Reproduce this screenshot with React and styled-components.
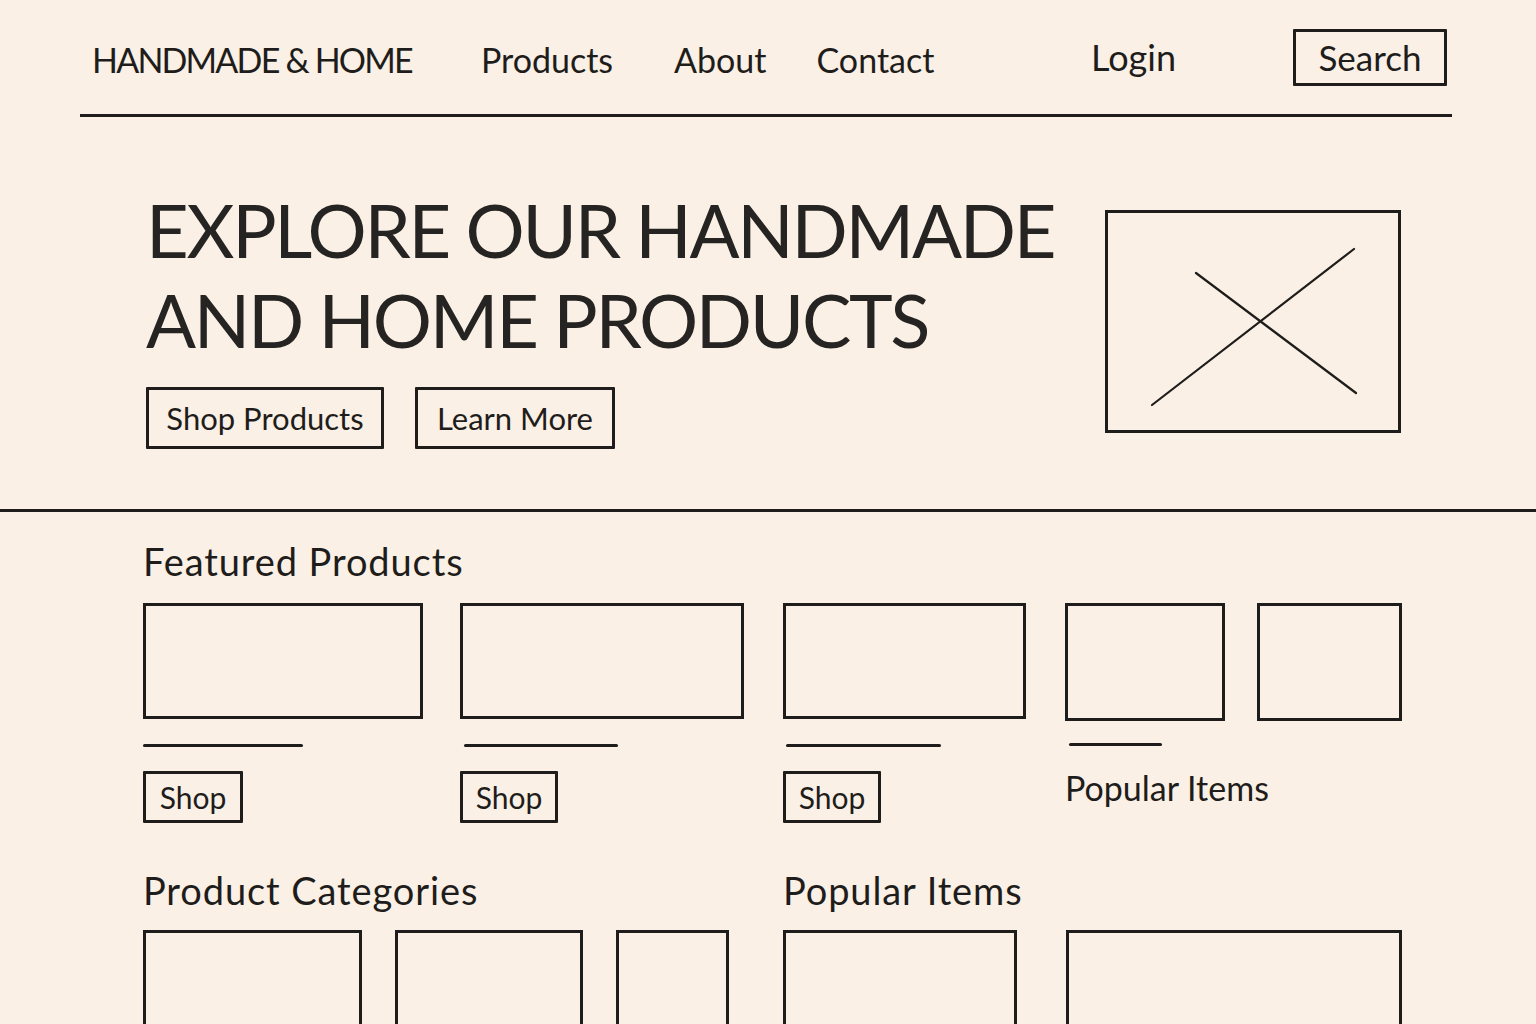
import React from "react";
import styled, { createGlobalStyle } from "styled-components";

const INK = "#1f1d1b";

const Global = createGlobalStyle`
  html, body { margin: 0; padding: 0; background: #faf0e5; }
  body { font-family: Lato, "Open Sans", sans-serif; color: ${INK}; }
  * { box-sizing: border-box; }
`;

const Page = styled.div`
  width: 1536px;
  height: 1024px;
  overflow: hidden;
  background: #faf0e5;
`;

const Nav = styled.header`
  margin: 0 84px 0 80px;
  height: 117px;
  border-bottom: 3px solid ${INK};
  display: flex;
  align-items: center;
  padding: 0 5px 0 12px;
`;

const Logo = styled.div`
  font-size: 34px;
  letter-spacing: -1.8px;
  margin-right: 69px;
  padding-top: 4px;
  white-space: nowrap;
`;

const NavLink = styled.a`
  font-size: ${(p) => p.$size || 34}px;
  margin-right: ${(p) => p.$gap}px;
  padding-top: ${(p) => (p.$lift ? 0 : 4)}px;
  color: ${INK};
  text-decoration: none;
  white-space: nowrap;
`;

const Spacer = styled.div`
  flex: 1;
`;

const Outline = styled.button`
  font-family: inherit;
  background: transparent;
  color: ${INK};
  border: 3px solid ${INK};
  border-radius: 1px;
  font-size: ${(p) => p.$size || 30}px;
  width: ${(p) => p.$w}px;
  height: ${(p) => p.$h}px;
  padding: 0;
  display: flex;
  align-items: center;
  justify-content: center;
  white-space: nowrap;
`;

const Hero = styled.section`
  height: 395px;
  border-bottom: 3px solid ${INK};
  display: flex;
  padding: 0 135px 0 146px;
`;

const HeroText = styled.div`
  flex: 1;
  padding-top: 68px;
`;

const Title = styled.h1`
  margin: 0;
  font-weight: 400;
  font-size: 74px;
  line-height: 90px;
  letter-spacing: -2.3px;
  white-space: nowrap;
  color: #262422;
`;

const ButtonRow = styled.div`
  display: flex;
  gap: 31px;
  margin-top: 22px;
`;

const ImageBox = styled.div`
  width: 296px;
  height: 223px;
  margin-top: 93px;
  border: 3px solid ${INK};
  svg { display: block; }
`;

const Content = styled.main`
  padding: 26px 0 0 143px;
`;

const SectionTitle = styled.h2`
  margin: 0;
  font-weight: 400;
  font-size: 38px;
  line-height: 46px;
  letter-spacing: 0.9px;
  white-space: nowrap;
`;

const CardRow = styled.div`
  display: flex;
  margin-top: 19px;
`;

const Card = styled.div`
  width: ${(p) => p.$w}px;
  margin-right: ${(p) => p.$gap}px;
  display: flex;
  flex-direction: column;
`;

const Thumb = styled.div`
  width: 100%;
  height: ${(p) => p.$h || 116}px;
  border: 3px solid ${INK};
`;

const Rule = styled.div`
  width: ${(p) => p.$w}px;
  height: 3px;
  background: ${INK};
  border-radius: 2px;
  margin: ${(p) => p.$mt}px 0 0 ${(p) => p.$ml || 0}px;
`;

const ShopWrap = styled.div`
  margin-top: 24px;
`;

const Label = styled.div`
  font-size: 34px;
  margin-top: 21px;
  white-space: nowrap;
`;

const Lower = styled.div`
  display: flex;
  margin-top: 44px;
`;

const Column = styled.div`
  width: ${(p) => p.$w}px;
`;

const BoxRow = styled.div`
  display: flex;
  margin-top: 17px;
`;

const TallBox = styled.div`
  width: ${(p) => p.$w}px;
  height: 120px;
  margin-right: ${(p) => p.$gap}px;
  border: 3px solid ${INK};
  border-bottom: none;
`;

export default function App() {
  return (
    <Page>
      <Global />
      <Nav>
        <Logo>HANDMADE &amp; HOME</Logo>
        <NavLink $gap={61}>Products</NavLink>
        <NavLink $gap={50}>About</NavLink>
        <NavLink $gap={0}>Contact</NavLink>
        <Spacer />
        <NavLink $gap={117} $lift $size={36}>Login</NavLink>
        <Outline $w={154} $h={57} $size={35}>Search</Outline>
      </Nav>

      <Hero>
        <HeroText>
          <Title>
            EXPLORE OUR HANDMADE
            <br />
            AND HOME PRODUCTS
          </Title>
          <ButtonRow>
            <Outline $w={238} $h={62} $size={31}>Shop Products</Outline>
            <Outline $w={200} $h={62} $size={31}>Learn More</Outline>
          </ButtonRow>
        </HeroText>
        <ImageBox>
          <svg width="290" height="217" viewBox="0 0 290 217">
            <line x1="44" y1="192" x2="246" y2="36" stroke={INK} strokeWidth="2.2" strokeLinecap="round" />
            <line x1="88" y1="60" x2="248" y2="180" stroke={INK} strokeWidth="2.2" strokeLinecap="round" />
          </svg>
        </ImageBox>
      </Hero>

      <Content>
        <SectionTitle>Featured Products</SectionTitle>
        <CardRow>
          <Card $w={280} $gap={37}>
            <Thumb />
            <Rule $w={160} $mt={25} />
            <ShopWrap><Outline $w={100} $h={52}>Shop</Outline></ShopWrap>
          </Card>
          <Card $w={284} $gap={39}>
            <Thumb />
            <Rule $w={154} $mt={25} $ml={4} />
            <ShopWrap><Outline $w={98} $h={52}>Shop</Outline></ShopWrap>
          </Card>
          <Card $w={243} $gap={39}>
            <Thumb />
            <Rule $w={155} $mt={25} $ml={3} />
            <ShopWrap><Outline $w={98} $h={52}>Shop</Outline></ShopWrap>
          </Card>
          <Card $w={160} $gap={32}>
            <Thumb $h={118} />
            <Rule $w={93} $mt={22} $ml={4} />
            <Label>Popular Items</Label>
          </Card>
          <Card $w={145} $gap={0}>
            <Thumb $h={118} />
          </Card>
        </CardRow>

        <Lower>
          <Column $w={640}>
            <SectionTitle>Product Categories</SectionTitle>
            <BoxRow>
              <TallBox $w={219} $gap={33} />
              <TallBox $w={188} $gap={33} />
              <TallBox $w={113} $gap={0} />
            </BoxRow>
          </Column>
          <Column $w={620}>
            <SectionTitle>Popular Items</SectionTitle>
            <BoxRow>
              <TallBox $w={234} $gap={49} />
              <TallBox $w={336} $gap={0} />
            </BoxRow>
          </Column>
        </Lower>
      </Content>
    </Page>
  );
}
